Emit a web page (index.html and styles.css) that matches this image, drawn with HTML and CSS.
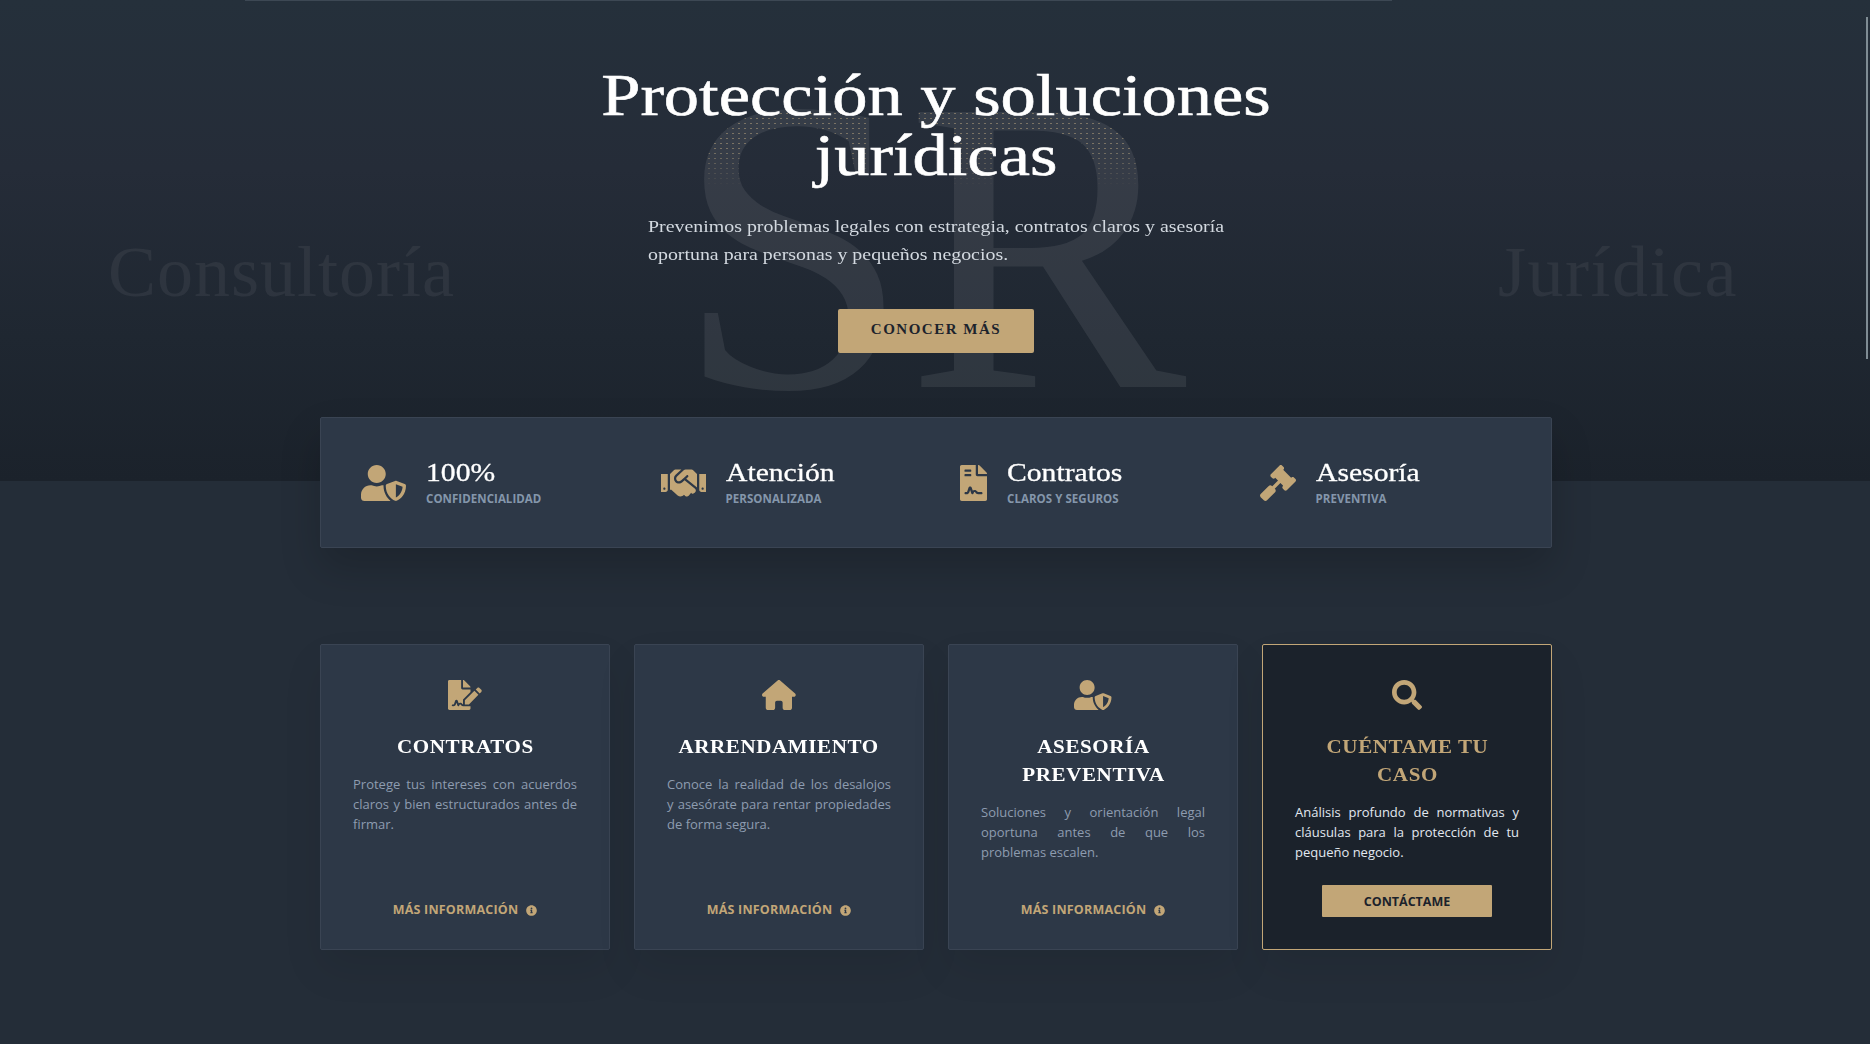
FILE: index.html
```html
<!DOCTYPE html>
<html lang="es">
<head>
<meta charset="utf-8">
<title>Consultoría Jurídica</title>
<link rel="stylesheet" href="styles.css">
</head>
<body>
<div class="page">
  <section class="hero">
    <div class="hero-rule"></div>
    <div class="mark mark-sr" aria-hidden="true">SR</div>
    <div class="mark mark-left" aria-hidden="true">Consultoría</div>
    <div class="mark mark-right" aria-hidden="true">Jurídica</div>
    <div class="hero-body">
      <h1 class="hero-title">Protección y soluciones<br>jurídicas</h1>
      <p class="hero-lead">Prevenimos problemas legales con estrategia, contratos claros y asesoría oportuna para personas y pequeños negocios.</p>
      <a class="hero-btn">CONOCER MÁS</a>
    </div>
  </section>

  <main class="content">
    <section class="stats">
      <div class="stat">
        <svg class="stat-icon w45" viewBox="0 0 640 512"><path d="M622.3 271.1l-115.2-45c-4.1-1.6-12.6-3.7-22.2 0l-115.2 45c-10.7 4.2-17.7 14-17.7 24.9 0 111.6 68.7 188.8 132.9 213.9 9.6 3.7 18 1.6 22.2 0C558.4 489.9 640 420.5 640 296c0-10.9-7-20.7-17.7-24.9zM496 462.4V273.3l95.5 37.3c-5.6 87.1-60.9 135.4-95.5 151.8zM224 256c70.7 0 128-57.3 128-128S294.7 0 224 0 96 57.3 96 128s57.3 128 128 128zm96 40c0-2.5.8-4.8 1.1-7.2-2.5-.1-4.9-.8-7.5-.8h-16.7c-22.2 10.2-46.9 16-72.9 16s-50.6-5.8-72.9-16h-16.7C60.2 288 0 348.2 0 422.4V464c0 26.5 21.5 48 48 48h352c6.8 0 13.3-1.5 19.2-4-54-42.9-99.2-116.7-99.2-212z"/></svg>
        <div class="stat-text"><strong class="stat-title">100%</strong><span class="stat-sub">CONFIDENCIALIDAD</span></div>
      </div>
      <div class="stat">
        <svg class="stat-icon w45" viewBox="0 0 640 512"><path d="M434.7 64h-85.9c-8 0-15.7 3-21.6 8.4l-98.3 90c-.1.1-.2.3-.3.4-16.6 15.6-16.3 40.5-2.1 56 12.7 13.9 39.4 17.6 56.1 2.7.1-.1.3-.1.4-.2l79.9-73.2c6.5-5.9 16.7-5.5 22.6 1 6 6.5 5.5 16.6-1 22.6l-26.1 23.9L504 313.8c2.9 2.4 5.5 5 7.9 7.7V128l-54.6-54.6c-5.9-6-14.1-9.4-22.6-9.4zM544 128.2v223.9c0 17.7 14.3 32 32 32h64V128.2h-96zm48 223.9c-8.8 0-16-7.2-16-16s7.2-16 16-16 16 7.2 16 16-7.2 16-16 16zM0 384h64c17.7 0 32-14.3 32-32V128.2H0V384zm48-63.9c8.8 0 16 7.2 16 16s-7.2 16-16 16-16-7.2-16-16c0-8.9 7.2-16 16-16zm435.9 18.6L334.6 217.5l-30 27.5c-29.7 27.1-75.2 24.5-101.7-4.4-26.9-29.4-24.8-74.9 4.4-101.7L289.1 64h-83.8c-8.5 0-16.6 3.4-22.6 9.4L128 128v223.9h18.3l90.5 81.9c27.4 22.3 67.7 18.1 90-9.3l.2-.2 17.9 15.5c15.9 13 39.4 10.5 52.3-5.4l31.4-38.6 5.4 4.4c13.7 11.1 33.9 9.1 45-4.7l9.5-11.7c11.2-13.8 9.1-33.9-4.6-45.1z"/></svg>
        <div class="stat-text"><strong class="stat-title">Atención</strong><span class="stat-sub">PERSONALIZADA</span></div>
      </div>
      <div class="stat">
        <svg class="stat-icon w27" viewBox="0 0 384 512"><path d="M224 136V0H24C10.7 0 0 10.7 0 24v464c0 13.3 10.7 24 24 24h336c13.3 0 24-10.7 24-24V160H248c-13.2 0-24-10.8-24-24zM64 72c0-4.42 3.58-8 8-8h80c4.42 0 8 3.58 8 8v16c0 4.42-3.58 8-8 8H72c-4.42 0-8-3.58-8-8V72zm0 64c0-4.42 3.58-8 8-8h80c4.42 0 8 3.58 8 8v16c0 4.42-3.58 8-8 8H72c-4.42 0-8-3.58-8-8v-16zm192.81 248H304c8.84 0 16 7.16 16 16s-7.16 16-16 16h-47.19c-16.45 0-31.27-9.14-38.64-23.86-2.95-5.92-8.09-6.52-10.17-6.52s-7.22.59-10.02 6.19l-7.67 15.34a15.986 15.986 0 0 1-14.31 8.84c-.38 0-.75-.02-1.14-.05-6.45-.45-12-4.75-14.03-10.89L144 354.59l-10.61 31.88c-5.89 17.66-22.38 29.53-41 29.53H80c-8.84 0-16-7.16-16-16s7.16-16 16-16h12.39c4.83 0 9.11-3.08 10.64-7.66l18.19-54.64c3.3-9.81 12.44-16.41 22.78-16.41s19.48 6.59 22.77 16.41l13.88 41.64c19.77-16.19 54.05-9.7 66 14.16 2.02 4.06 5.96 6.5 10.16 6.5zM377 105L279.1 7c-4.5-4.5-10.6-7-17-7H256v128h128v-6.1c0-6.3-2.5-12.4-7-16.9z"/></svg>
        <div class="stat-text"><strong class="stat-title">Contratos</strong><span class="stat-sub">CLAROS Y SEGUROS</span></div>
      </div>
      <div class="stat">
        <svg class="stat-icon w36" viewBox="0 0 512 512"><path d="M504.971 199.362l-22.627-22.627c-9.373-9.373-24.569-9.373-33.941 0l-5.657 5.657L329.608 69.255l5.657-5.657c9.373-9.373 9.373-24.569 0-33.941L312.638 7.029c-9.373-9.373-24.569-9.373-33.941 0L154.246 131.48c-9.373 9.373-9.373 24.569 0 33.941l22.627 22.627c9.373 9.373 24.569 9.373 33.941 0l5.657-5.657 39.598 39.598-81.04 81.04-5.657-5.657c-12.497-12.497-32.758-12.497-45.255 0L9.373 412.118c-12.497 12.497-12.497 32.758 0 45.255l45.255 45.255c12.497 12.497 32.758 12.497 45.255 0l114.745-114.745c12.497-12.497 12.497-32.758 0-45.255l-5.657-5.657 81.04-81.04 39.598 39.598-5.657 5.657c-9.373 9.373-9.373 24.569 0 33.941l22.627 22.627c9.373 9.373 24.569 9.373 33.941 0l124.451-124.451c9.372-9.372 9.372-24.568 0-33.941z"/></svg>
        <div class="stat-text"><strong class="stat-title">Asesoría</strong><span class="stat-sub">PREVENTIVA</span></div>
      </div>
    </section>

    <section class="cards">
      <article class="card">
        <svg class="card-icon" viewBox="0 0 576 512"><path d="M218.17 424.14c-2.95-5.92-8.09-6.52-10.17-6.52s-7.22.59-10.02 6.19l-7.67 15.34c-6.37 12.78-25.03 11.37-29.48-2.09L144 386.59l-10.61 31.88c-5.89 17.66-22.38 29.53-41 29.53H80c-8.84 0-16-7.16-16-16s7.16-16 16-16h12.39c4.83 0 9.11-3.08 10.64-7.66l18.19-54.64c3.3-9.81 12.44-16.41 22.78-16.41s19.48 6.59 22.77 16.41l13.88 41.64c19.75-16.19 54.06-9.7 66 14.16 1.89 3.78 5.49 5.95 9.36 6.26v-82.12l128-127.09V160H248c-13.2 0-24-10.8-24-24V0H24C10.7 0 0 10.7 0 24v464c0 13.3 10.7 24 24 24h336c13.3 0 24-10.7 24-24v-40l-128-.11c-16.12-.31-30.58-9.61-37.83-23.75zM384 121.9c0-6.3-2.5-12.4-7-16.9L279.1 7c-4.5-4.5-10.6-7-17-7H256v128h128v-6.1zm-96 225.06V416h68.99l161.68-162.78-67.88-67.88L288 346.96zm280.54-179.63l-31.87-31.87c-9.94-9.94-26.07-9.94-36.01 0l-27.25 27.25 67.88 67.88 27.25-27.25c9.95-9.94 9.95-26.07 0-36.01z"/></svg>
        <h3 class="card-title">CONTRATOS</h3>
        <p class="card-text">Protege tus intereses con acuerdos claros y bien estructurados antes de firmar.</p>
        <a class="card-link">MÁS INFORMACIÓN <svg class="info" viewBox="0 0 512 512"><path d="M256 8C119 8 8 119.1 8 256c0 137 111 248 248 248s248-111 248-248C504 119.1 393 8 256 8zm0 110c23.2 0 42 18.8 42 42s-18.8 42-42 42-42-18.8-42-42 18.8-42 42-42zm56 254c0 6.6-5.4 12-12 12h-88c-6.6 0-12-5.4-12-12v-24c0-6.6 5.4-12 12-12h12v-64h-12c-6.6 0-12-5.4-12-12v-24c0-6.6 5.4-12 12-12h64c6.6 0 12 5.4 12 12v100h12c6.6 0 12 5.4 12 12v24z"/></svg></a>
      </article>
      <article class="card">
        <svg class="card-icon" viewBox="0 0 576 512"><path d="M575.8 255.5c0 18-15 32.1-32 32.1h-32l.7 160.2c0 2.7-.2 5.4-.5 8.1V472c0 22.1-17.9 40-40 40H456c-1.1 0-2.2 0-3.3-.1c-1.4 .1-2.8 .1-4.2 .1H416 392c-22.1 0-40-17.9-40-40V448 384c0-17.7-14.3-32-32-32H256c-17.7 0-32 14.3-32 32v64 24c0 22.1-17.9 40-40 40H160 128.1c-1.5 0-3-.1-4.5-.2c-1.2 .1-2.4 .2-3.6 .2H104c-22.1 0-40-17.9-40-40V360c0-.9 0-1.9 .1-2.8V287.6H32c-18 0-32-14-32-32.1c0-9 3-17 10-24L266.4 8c7-7 15-8 22-8s15 2 21 7L564.8 231.5c8 7 12 15 11 24z"/></svg>
        <h3 class="card-title">ARRENDAMIENTO</h3>
        <p class="card-text">Conoce la realidad de los desalojos y&nbsp;asesórate para rentar propiedades de forma segura.</p>
        <a class="card-link">MÁS INFORMACIÓN <svg class="info" viewBox="0 0 512 512"><path d="M256 8C119 8 8 119.1 8 256c0 137 111 248 248 248s248-111 248-248C504 119.1 393 8 256 8zm0 110c23.2 0 42 18.8 42 42s-18.8 42-42 42-42-18.8-42-42 18.8-42 42-42zm56 254c0 6.6-5.4 12-12 12h-88c-6.6 0-12-5.4-12-12v-24c0-6.6 5.4-12 12-12h12v-64h-12c-6.6 0-12-5.4-12-12v-24c0-6.6 5.4-12 12-12h64c6.6 0 12 5.4 12 12v100h12c6.6 0 12 5.4 12 12v24z"/></svg></a>
      </article>
      <article class="card">
        <svg class="card-icon" viewBox="0 0 640 512"><path d="M622.3 271.1l-115.2-45c-4.1-1.6-12.6-3.7-22.2 0l-115.2 45c-10.7 4.2-17.7 14-17.7 24.9 0 111.6 68.7 188.8 132.9 213.9 9.6 3.7 18 1.6 22.2 0C558.4 489.9 640 420.5 640 296c0-10.9-7-20.7-17.7-24.9zM496 462.4V273.3l95.5 37.3c-5.6 87.1-60.9 135.4-95.5 151.8zM224 256c70.7 0 128-57.3 128-128S294.7 0 224 0 96 57.3 96 128s57.3 128 128 128zm96 40c0-2.5.8-4.8 1.1-7.2-2.5-.1-4.9-.8-7.5-.8h-16.7c-22.2 10.2-46.9 16-72.9 16s-50.6-5.8-72.9-16h-16.7C60.2 288 0 348.2 0 422.4V464c0 26.5 21.5 48 48 48h352c6.8 0 13.3-1.5 19.2-4-54-42.9-99.2-116.7-99.2-212z"/></svg>
        <h3 class="card-title">ASESORÍA PREVENTIVA</h3>
        <p class="card-text">Soluciones y orientación legal oportuna antes de que los problemas escalen.</p>
        <a class="card-link">MÁS INFORMACIÓN <svg class="info" viewBox="0 0 512 512"><path d="M256 8C119 8 8 119.1 8 256c0 137 111 248 248 248s248-111 248-248C504 119.1 393 8 256 8zm0 110c23.2 0 42 18.8 42 42s-18.8 42-42 42-42-18.8-42-42 18.8-42 42-42zm56 254c0 6.6-5.4 12-12 12h-88c-6.6 0-12-5.4-12-12v-24c0-6.6 5.4-12 12-12h12v-64h-12c-6.6 0-12-5.4-12-12v-24c0-6.6 5.4-12 12-12h64c6.6 0 12 5.4 12 12v100h12c6.6 0 12 5.4 12 12v24z"/></svg></a>
      </article>
      <article class="card card-dark">
        <svg class="card-icon" viewBox="0 0 512 512"><path d="M505 442.7L405.3 343c-4.5-4.5-10.6-7-17-7H372c27.6-35.3 44-79.7 44-128C416 93.1 322.9 0 208 0S0 93.1 0 208s93.1 208 208 208c48.3 0 92.7-16.4 128-44v16.3c0 6.4 2.5 12.5 7 17l99.7 99.7c9.4 9.4 24.6 9.4 33.9 0l28.3-28.3c9.4-9.4 9.4-24.6.1-34zM208 336c-70.7 0-128-57.2-128-128 0-70.7 57.2-128 128-128 70.7 0 128 57.2 128 128 0 70.7-57.2 128-128 128z"/></svg>
        <h3 class="card-title">CUÉNTAME TU CASO</h3>
        <p class="card-text">Análisis profundo de normativas y cláusulas para la protección de tu pequeño negocio.</p>
        <a class="card-btn">CONTÁCTAME</a>
      </article>
    </section>
  </main>
  <div class="scroll-thumb"></div>
</div>
</body>
</html>
```
FILE: styles.css
```css
* { box-sizing: border-box; }
html, body { margin: 0; height: 1044px; overflow: hidden; background: #242d38; }
.page { position: relative; width: 1872px; height: 1044px; overflow: hidden; font-family: "Open Sans", "Liberation Sans", sans-serif; color: #fff; }

.hero { position: relative; height: 481px; padding-top: 65px; background: linear-gradient(180deg, #25303b 0%, #252c38 35%, #1f2731 70%, #1b222b 100%); text-align: center; overflow: hidden; }
.hero-rule { position: absolute; top: 0; left: 245px; width: 1147px; height: 1px; background: #3d4854; }
.hero-body { position: relative; }
.mark { position: absolute; font-family: "Liberation Serif", serif; color: rgba(255,255,255,.06); line-height: 1; white-space: nowrap; }
.mark-sr { left: 676px; top: 36px; font-size: 420px; letter-spacing: -3px; color: rgba(255,255,255,.08); }
.mark-sr::after { content: "SR"; position: absolute; left: 0; top: 0; color: transparent; background: radial-gradient(circle, rgba(190,170,130,.5) .6px, transparent 1px) 0 0 / 6px 5px; -webkit-background-clip: text; background-clip: text; -webkit-mask-image: linear-gradient(180deg, transparent 16%, #000 18%, #000 27%, transparent 36%); mask-image: linear-gradient(180deg, transparent 16%, #000 18%, #000 27%, transparent 36%); }
.mark-left { left: 108px; top: 236px; font-size: 72px; letter-spacing: 1px; }
.mark-right { left: 1498px; top: 236px; font-size: 72px; letter-spacing: 1.5px; }

.hero-title { margin: 0; font-family: "Liberation Serif", serif; font-weight: 400; font-size: 60px; line-height: 60px; color: #fff; transform: scaleX(1.175); -webkit-text-stroke: .6px #fff; }
.hero-lead { width: 500px; margin: 28px 0 0 648px; font-family: "Liberation Serif", serif; font-size: 17px; line-height: 28px; color: #d3d9e0; text-align: left; transform: scaleX(1.17); transform-origin: 0 0; }
.hero-btn { display: block; width: 196px; height: 44px; margin: 40px auto 0; border-radius: 2px; background: #c2a677; color: #1c232c; font-family: "Liberation Serif", serif; font-weight: 700; font-size: 15px; line-height: 41px; letter-spacing: 1.5px; }

.content { position: relative; width: 1232px; margin: -64px auto 0; }
.stats { display: grid; grid-template-columns: repeat(4, 1fr); column-gap: 48px; align-items: center; height: 131px; padding: 0 40px; background: #2d3847; border: 1px solid #3a4453; border-radius: 2px; box-shadow: 0 20px 40px rgba(0,0,0,.18); }
.stat { display: flex; align-items: center; gap: 20px; }
.stat-icon { height: 36px; fill: #c2a677; flex: none; }
.w45 { width: 45px; }
.w36 { width: 36px; }
.w27 { width: 27px; }
.stat-text { display: flex; flex-direction: column; }
.stat-title { display: block; font-family: "Liberation Serif", serif; font-weight: 400; font-size: 26px; line-height: 30px; color: #fff; transform: scaleX(1.14); transform-origin: 0 50%; -webkit-text-stroke: .3px #fff; }
.stat-sub { margin-top: 3px; font-size: 11.5px; line-height: 16px; font-weight: 700; letter-spacing: .05px; color: #8496ab; }

.cards { display: grid; grid-template-columns: repeat(4, 290px); column-gap: 24px; margin-top: 96px; }
.card { display: flex; flex-direction: column; align-items: center; height: 306px; padding: 35px 32px 32px; background: #2d3847; border: 1px solid #3a4453; border-radius: 2px; box-shadow: 0 20px 40px rgba(0,0,0,.08); }
.card-icon { height: 30px; width: auto; fill: #c2a677; flex: none; }
.card-title { max-width: 191px; margin: 23px 0 13px; font-family: "Liberation Serif", serif; font-weight: 700; font-size: 18px; line-height: 28px; letter-spacing: .5px; text-align: center; color: #fff; transform: scaleX(1.17); }
.card-text { align-self: stretch; margin: 0; font-size: 13px; line-height: 20px; text-align: justify; color: #8d9cb0; }
.card-link { display: flex; align-items: center; gap: 8px; margin-top: auto; font-size: 12.5px; line-height: 14px; font-weight: 700; letter-spacing: .2px; color: #c2a677; }
.info { width: 11px; height: 11px; fill: #c2a677; }
.card-dark { background: #1b222b; border-color: #c2a677; }
.card-dark .card-title { color: #c2a677; }
.card-dark .card-text { color: #e2e8f0; }
.card-btn { display: block; width: 170px; height: 32px; margin-top: auto; border-radius: 1px; background: #c2a677; color: #1b222b; font-size: 12.5px; font-weight: 700; line-height: 33px; text-align: center; }

.scroll-thumb { position: absolute; left: 1866px; top: 17px; width: 2px; height: 342px; background: #7f8c94; }
```
